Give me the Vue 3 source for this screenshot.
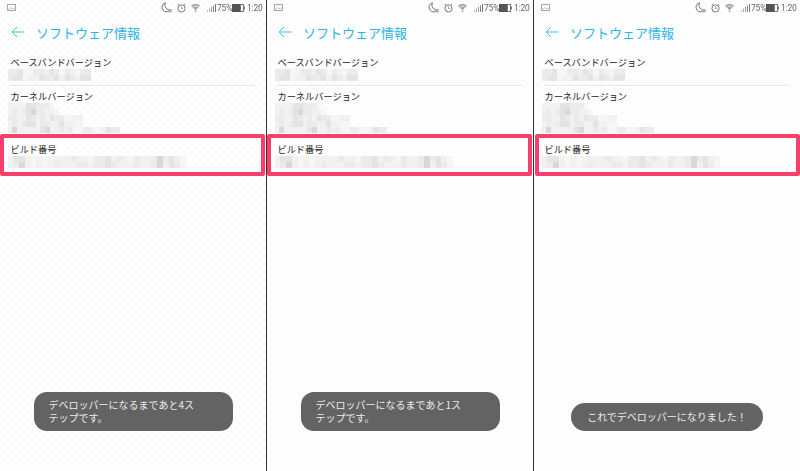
<script setup>
const phones = [
  { message: 'デベロッパーになるまであと4ステップです。', wide: true },
  { message: 'デベロッパーになるまであと1ステップです。', wide: true },
  { message: 'これでデベロッパーになりました！', wide: false }
];

// モザイク部分: 1文字 = 1セル、数字が濃さ
const shades = { 0: 'transparent', 1: '#f6f6f6', 2: '#f1f1f1', 3: '#ebebeb', 4: '#e4e4e4', 5: '#d8d8d8' };

const toCells = (rows) =>
  rows.flatMap((row, y) =>
    row.split('').map((c, x) => ({ id: `${x}-${y}`, color: shades[c] }))
  );

const baseband = toCells([
  '33411332431321330',
  '34412243342432440',
]);
const kernel = toCells([
  '2222443331000000000000000',
  '2323453322100000000000000',
  '3322432324331122000000000',
  '2323442332242211000000000',
  '2522222452232311331124330',
]);
const build = toCells([
  '24421212222322133423213223534210',
  '23521212322233233432223223524310',
]);
</script>

<template>
  <div class="screens">
    <section v-for="(p, i) in phones" :key="i" class="phone">
      <div class="status">
        <svg width="9" height="7" viewBox="0 0 9 7">
          <rect x="0.5" y="0.5" width="8" height="6" fill="none" stroke="#a8a8a8" />
          <path d="M1 6 L3.5 3.5 L5 5 L6.5 4 L8 5.5" fill="none" stroke="#b4b4b4" stroke-width="0.8" />
        </svg>
        <span class="grow"></span>
        <svg width="11" height="11" viewBox="0 0 11 11">
          <path d="M4.5 0.8 A4.6 4.6 0 1 0 9.6 7.6 A4.6 4.6 0 0 1 4.5 0.8 Z" fill="none" stroke="#777" stroke-width="1" />
          <rect x="7" y="7" width="3.6" height="3.4" fill="#aaa" />
        </svg>
        <svg class="ml5" width="9" height="10" viewBox="0 0 9 10">
          <circle cx="4.5" cy="5.4" r="3.6" fill="none" stroke="#777" stroke-width="1" />
          <path d="M4.5 3.4 V5.6 H6" fill="none" stroke="#888" stroke-width="0.8" />
          <path d="M0.6 2 L2 0.8 M8.4 2 L7 0.8" stroke="#777" stroke-width="1" />
        </svg>
        <svg class="ml5" width="9" height="9" viewBox="0 0 9 9">
          <path d="M0 2.5 Q4.5 -1 9 2.5 L5 7 H4 Z" fill="#a6a6a6" />
          <path d="M2 3.8 Q4.5 2 7 3.8" fill="none" stroke="#fff" stroke-width="0.7" />
          <rect x="3.8" y="7.6" width="1.4" height="1.2" fill="#888" />
        </svg>
        <svg class="ml7" width="9" height="8" viewBox="0 0 9 8">
          <rect x="0" y="6" width="1" height="2" fill="#bbb" />
          <rect x="2" y="4.5" width="1" height="3.5" fill="#aaa" />
          <rect x="4" y="3" width="1" height="5" fill="#999" />
          <rect x="6" y="1.5" width="1" height="6.5" fill="#888" />
          <rect x="8" y="0" width="1" height="8" fill="#777" />
        </svg>
        <span class="pct">75%</span>
        <svg class="ml1" width="13" height="8" viewBox="0 0 13 8">
          <rect x="0" y="0" width="8" height="8" fill="#555" />
          <rect x="8.5" y="0.5" width="3" height="7" fill="#fff" stroke="#777" stroke-width="1" />
          <rect x="12" y="2.5" width="1" height="3" fill="#777" />
        </svg>
        <span class="time">1:20</span>
      </div>

      <header class="bar">
        <svg width="14" height="12" viewBox="0 0 14 12">
          <path d="M13.5 6 H1 M6 1 L1 6 L6 11" fill="none" stroke="#45bfee" stroke-width="1" />
        </svg>
        <h1 class="title">ソフトウェア情報</h1>
      </header>

      <div class="info">
        <div class="item">
          <div class="label">ベースバンドバージョン</div>
          <div class="mosaic">
            <i v-for="c in baseband" :key="c.id" :style="{ background: c.color }"></i>
          </div>
        </div>
        <div class="rule"></div>
        <div class="item kernel">
          <div class="label">カーネルバージョン</div>
          <div class="mosaic">
            <i v-for="c in kernel" :key="c.id" :style="{ background: c.color }"></i>
          </div>
        </div>
        <div class="item build">
          <div class="label">ビルド番号</div>
          <div class="mosaic">
            <i v-for="c in build" :key="c.id" :style="{ background: c.color }"></i>
          </div>
          <div class="mark"></div>
        </div>
      </div>

      <div class="toast" :class="{ wide: p.wide }">{{ p.message }}</div>
    </section>
  </div>
</template>

<style scoped>
.screens {
  display: flex;
  width: 800px;
  height: 471px;
  overflow: hidden;
  background: #333;
  gap: 1px;
  font-family: "Noto Sans CJK JP", "Liberation Sans", sans-serif;
}
.phone {
  flex: 1 1 0;
  min-width: 0;
  display: flex;
  flex-direction: column;
  background-color: #fefefe;
  background-image:
    radial-gradient(#f0f3f3 0.6px, transparent 0.8px),
    radial-gradient(#f0f3f3 0.6px, transparent 0.8px);
  background-size: 8px 8px;
  background-position: 0 0, 4px 4px;
}
.status {
  display: flex;
  align-items: center;
  height: 15px;
  padding: 0 6px 0 7px;
  flex: none;
  filter: blur(0.3px);
}
.grow { flex: 1; }
.ml1 { margin-left: 1px; }
.ml5 { margin-left: 5px; }
.ml7 { margin-left: 7px; }
.pct, .time {
  font-family: "Roboto", "Liberation Sans", sans-serif;
  color: #666;
  white-space: nowrap;
}
.pct { width: 14px; margin-left: 1px; font-size: 8.5px; letter-spacing: -0.2px; }
.time { width: 13px; margin-left: 2px; font-size: 8.5px; letter-spacing: -0.2px; }
.bar {
  display: flex;
  align-items: center;
  height: 34px;
  padding-left: 11px;
  flex: none;
}
.title {
  margin: 0 0 0 11px;
  font-size: 13px;
  font-weight: 400;
  color: #2cb4e6;
  line-height: 1;
}
.info {
  display: flex;
  flex-direction: column;
}
.item {
  position: relative;
  padding: 7px 0 0 10.5px;
}
.label {
  font-size: 9.2px;
  line-height: 13px;
  color: #222;
}
.mosaic {
  display: grid;
  grid-auto-rows: 6px;
  margin-left: -3px;
  height: 12px;
  grid-template-columns: repeat(17, 5.2px);
  filter: blur(0.5px);
}
.mosaic i { display: block; }
.rule {
  height: 1px;
  margin: 4px 11px 0 10px;
  background: #e8e8e8;
}
.kernel { padding-top: 4px; }
.kernel .mosaic {
  grid-template-columns: repeat(25, 4.7px);
  height: 30px;
}
.build { padding-top: 10px; }
.build .mosaic {
  grid-template-columns: repeat(32, 5.75px);
}
.mark {
  position: absolute;
  left: 0;
  right: 1px;
  top: 1px;
  height: 42px;
  border: 4px solid #f73f6b;
  border-radius: 2px;
  box-sizing: border-box;
}
.phone:last-child .mark {
  left: 1px;
  right: 0;
}
.toast {
  margin-top: auto;
  margin-bottom: 40px;
  align-self: center;
  box-sizing: border-box;
  height: 28px;
  padding: 0 16px;
  display: flex;
  align-items: center;
  background: #636363;
  border-radius: 14px;
  color: #ededed;
  font-size: 10px;
  line-height: 12.5px;
}
.toast.wide {
  width: 199px;
  height: 39px;
  padding: 0 36px 0 15px;
  border-radius: 13px;
}
</style>

<style>
html, body { margin: 0; background: #fff; }
</style>
